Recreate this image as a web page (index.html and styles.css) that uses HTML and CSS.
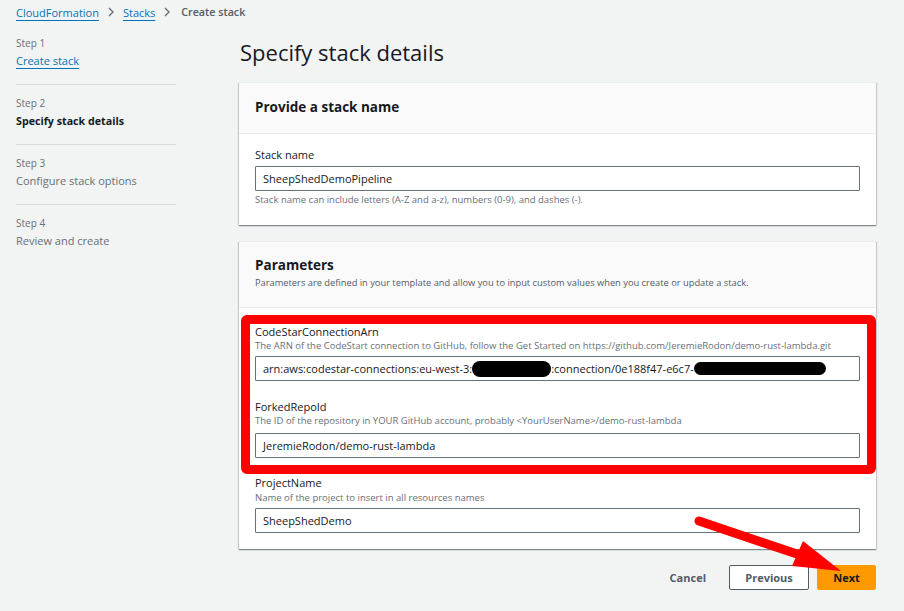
FILE: index.html
```html
<!DOCTYPE html>
<html lang="en">
<head>
<meta charset="utf-8">
<title>Create stack</title>
<link rel="stylesheet" href="styles.css">
</head>
<body>
<nav class="breadcrumb">
  <a class="crumb-link" href="#">CloudFormation</a>
  <svg class="chev" viewBox="0 0 10 10" width="10" height="10"><path d="M3 1 L7 5 L3 9" fill="none" stroke="#687078" stroke-width="1.4"/></svg>
  <a class="crumb-link" href="#">Stacks</a>
  <svg class="chev" viewBox="0 0 10 10" width="10" height="10"><path d="M3 1 L7 5 L3 9" fill="none" stroke="#687078" stroke-width="1.4"/></svg>
  <span class="crumb-current">Create stack</span>
</nav>

<div class="layout">
  <aside class="steps">
    <div class="step first">
      <div class="step-num">Step 1</div>
      <a class="step-link" href="#">Create stack</a>
    </div>
    <div class="step">
      <div class="step-num">Step 2</div>
      <div class="step-title active">Specify stack details</div>
    </div>
    <div class="step">
      <div class="step-num">Step 3</div>
      <div class="step-title">Configure stack options</div>
    </div>
    <div class="step last">
      <div class="step-num">Step 4</div>
      <div class="step-title">Review and create</div>
    </div>
  </aside>

  <main class="main">
    <h1 class="page-title">Specify stack details</h1>

    <section class="card">
      <header class="card-head">
        <h2 class="card-title">Provide a stack name</h2>
      </header>
      <div class="card-body">
        <div class="field">
          <div class="field-label">Stack name</div>
          <div class="input">SheepShedDemoPipeline</div>
          <div class="field-hint">Stack name can include letters (A-Z and a-z), numbers (0-9), and dashes (-).</div>
        </div>
      </div>
    </section>

    <section class="card">
      <header class="card-head params-head">
        <h2 class="card-title">Parameters</h2>
        <p class="card-desc">Parameters are defined in your template and allow you to input custom values when you create or update a stack.</p>
      </header>
      <div class="card-body params-body">
        <div class="highlight">
          <div class="field">
            <div class="field-label">CodeStarConnectionArn</div>
            <div class="field-desc">The ARN of the CodeStart connection to GitHub, follow the Get Started on https://github.com/JeremieRodon/demo-rust-lambda.git</div>
            <div class="input">arn:aws:codestar-connections:eu-west-3:<span class="redact r1"></span>:connection/0e188f47-e6c7-<span class="redact r2"></span></div>
          </div>
          <div class="field">
            <div class="field-label">ForkedRepoId</div>
            <div class="field-desc">The ID of the repository in YOUR GitHub account, probably &lt;YourUserName&gt;/demo-rust-lambda</div>
            <div class="input">JeremieRodon/demo-rust-lambda</div>
          </div>
        </div>
        <div class="field after-highlight">
          <div class="field-label">ProjectName</div>
          <div class="field-desc">Name of the project to insert in all resources names</div>
          <div class="input">SheepShedDemo</div>
        </div>
      </div>
    </section>

    <div class="actions">
      <button class="btn btn-link">Cancel</button>
      <button class="btn btn-normal">Previous</button>
      <button class="btn btn-primary">Next</button>
    </div>
  </main>
</div>

<svg class="annotation" width="904" height="611" viewBox="0 0 904 611">
  <line x1="699" y1="521" x2="797" y2="554" stroke="#ff0000" stroke-width="9" stroke-linecap="round"/>
  <polygon points="803,541 792,566 841,571" fill="#ff0000"/>
</svg>
</body>
</html>
```

FILE: styles.css
```css
* { box-sizing: border-box; }

html, body {
  margin: 0;
  padding: 0;
}

body {
  background: #f2f3f3;
  font-family: "Open Sans", "Noto Sans", sans-serif;
  color: #16191f;
  width: 904px;
  height: 611px;
  overflow: hidden;
  position: relative;
}

.breadcrumb {
  display: flex;
  align-items: center;
  gap: 5px;
  padding: 2px 16px 0 16px;
  height: 22px;
  font-size: 11px;
}

.crumb-link {
  color: #0073bb;
  text-decoration: underline;
  text-underline-offset: 3px;
}

.chev { display: block; margin: 0 2px; }

.crumb-current {
  color: #545b64;
  font-weight: 600;
  font-size: 10.7px;
  margin-left: 2px;
}

.layout {
  display: grid;
  grid-template-columns: 160px 1fr;
  column-gap: 63px;
  padding: 0 28px 0 16px;
}

.step {
  height: 60px;
  border-bottom: 1px solid #d5dbdb;
  padding-top: 9px;
  font-size: 11px;
}

.step.first {
  height: 63px;
  padding-top: 12px;
}

.step.last { border-bottom: none; }

.step-num {
  font-size: 10px;
  color: #687078;
  line-height: 18px;
}

.step-link {
  display: block;
  width: fit-content;
  font-size: 11px;
  color: #0073bb;
  text-decoration: underline;
  text-underline-offset: 3px;
  line-height: 18px;
}

.step-title {
  font-size: 11px;
  color: #687078;
  line-height: 18px;
}

.step-title.active {
  color: #16191f;
  font-weight: 700;
  font-size: 10.7px;
}

.main {
  min-width: 0;
}

.page-title {
  margin: 0;
  font-size: 22px;
  font-weight: 400;
  line-height: 28px;
  padding-top: 16px;
  padding-left: 1px;
  height: 60px;
  color: #16191f;
}

.card {
  background: #ffffff;
  box-shadow: 0 1px 1px 0 rgba(0, 28, 36, 0.3), 1px 1px 1px 0 rgba(0, 28, 36, 0.15), -1px 1px 1px 0 rgba(0, 28, 36, 0.15);
  border-top: 1px solid #eaeded;
  margin-bottom: 16px;
}

.card-head {
  background: #fafafa;
  border-bottom: 1px solid #eaeded;
  padding: 14px 16px 0 16px;
  height: 51px;
}

.card-title {
  margin: 0;
  font-size: 13.5px;
  font-weight: 700;
  line-height: 20px;
}

.params-head {
  height: 66px;
  padding-top: 13px;
}

.card-desc {
  margin: 0;
  font-size: 9.3px;
  color: #545b64;
  line-height: 16px;
}

.card-body {
  padding: 13px 16px 17px 16px;
}

.field-label {
  font-size: 11px;
  line-height: 16px;
  color: #16191f;
}

.field-desc {
  font-size: 9.5px;
  color: #687078;
  line-height: 14px;
}

.input {
  margin-top: 3px;
  height: 25px;
  border: 1px solid #687078;
  border-radius: 1px;
  padding: 0 7px;
  font-size: 11px;
  line-height: 23px;
  color: #16191f;
  white-space: nowrap;
  overflow: hidden;
  display: flex;
  align-items: center;
}

.field-hint {
  font-size: 9.5px;
  color: #687078;
  line-height: 16px;
  margin-top: 1px;
}

.params-body {
  padding-top: 7px;
  padding-bottom: 16px;
}

.highlight {
  margin: 0 -16px 0 -14px;
  border: 9px solid #ff0000;
  border-radius: 6px;
  padding: 0 7px 7px 5px;
}

.highlight .field + .field { margin-top: 18px; }

.highlight .field + .field .input { margin-top: 5px; }

.params-body .field-label { line-height: 15px; }

.params-body .after-highlight .field-label { line-height: 17px; }

.redact {
  display: inline-block;
  background: #000;
  border-radius: 10px;
}

.r1 { width: 79px; height: 16px; }
.r2 { width: 132px; height: 13px; border-radius: 7px; }

.actions {
  display: flex;
  justify-content: flex-end;
  align-items: center;
  gap: 8px;
}

.btn {
  font-family: "Open Sans", "Noto Sans", sans-serif;
  font-size: 11px;
  font-weight: 700;
  height: 25px;
  border-radius: 2px;
  cursor: pointer;
}

.btn-link {
  background: transparent;
  border: 1px solid transparent;
  color: #545b64;
  padding: 0 14px 0 0;
}

.btn-normal {
  background: #ffffff;
  border: 1px solid #545b64;
  color: #545b64;
  width: 80px;
  padding: 0;
}

.btn-primary {
  background: #ff9900;
  border: 1px solid #ff9900;
  color: #16191f;
  width: 59px;
  padding: 0;
}

.annotation {
  position: absolute;
  left: 0;
  top: 0;
  pointer-events: none;
}
```
